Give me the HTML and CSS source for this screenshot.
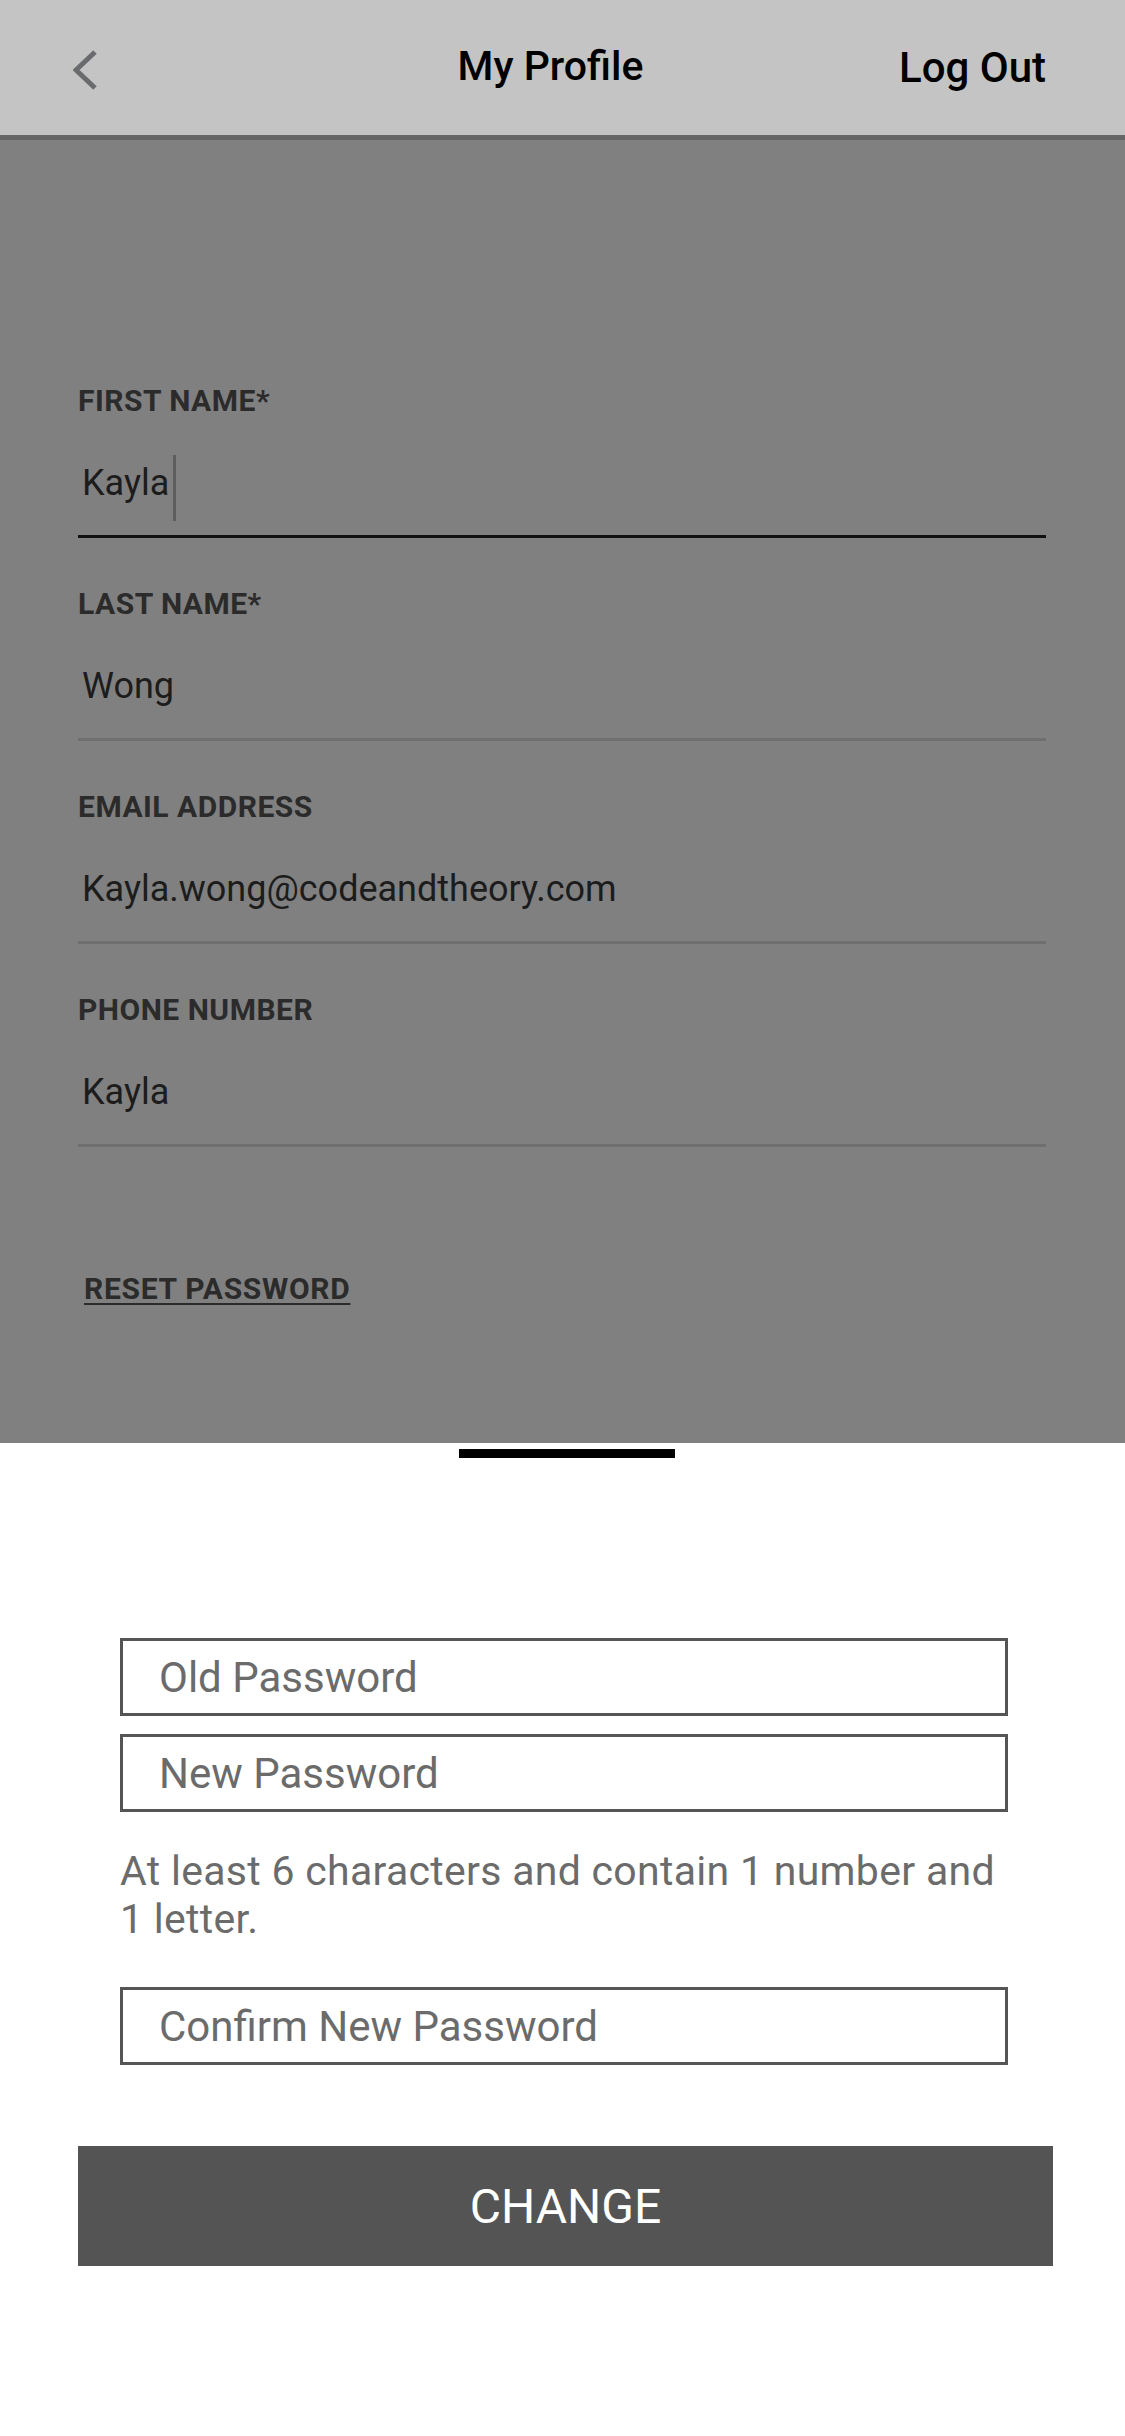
FILE: index.html
```html
<!DOCTYPE html>
<html lang="en">
<head>
  <meta charset="UTF-8" />
  <meta name="viewport" content="width=device-width, initial-scale=1.0"/>
  <title>My Profile</title>
  <link rel="stylesheet" href="styles.css">
</head>
<body>
  <header class="topbar">
    <button class="back" aria-label="Back">
      <svg width="30" height="44" viewBox="0 0 30 44">
        <polyline points="22,4 3,22 22,40" fill="none" stroke="#6a6b6e" stroke-width="5" stroke-linejoin="miter" />
      </svg>
    </button>
    <div class="title">My Profile</div>
    <a class="logout" href="#">Log Out</a>
  </header>

  <section class="profile">
    <div class="field">
      <label>FIRST NAME*</label>
      <div class="field-value focused">Kayla<span class="cursor"></span></div>
    </div>
    <div class="field">
      <label>LAST NAME*</label>
      <div class="field-value">Wong</div>
    </div>
    <div class="field">
      <label>EMAIL ADDRESS</label>
      <div class="field-value">Kayla.wong@codeandtheory.com</div>
    </div>
    <div class="field">
      <label>PHONE NUMBER</label>
      <div class="field-value">Kayla</div>
    </div>

    <a class="reset" href="#">RESET PASSWORD</a>
  </section>

  <section class="sheet">
    <div class="handle"></div>

    <form class="password-form">
      <input type="password" placeholder="Old Password">
      <input type="password" placeholder="New Password">
      <p class="hint">At least 6 characters and contain 1 number and 1 letter.</p>
      <input type="password" class="confirm" placeholder="Confirm New Password">
    </form>

    <button class="change">CHANGE</button>
  </section>
</body>
</html>
```

FILE: styles.css
```css
body {
  margin: 0;
  padding: 0;
  background: #ffffff;
  font-family: Roboto, "Noto Sans", sans-serif;
  color: #000;
}

/* top bar */
.topbar {
  height: 135px;
  background: #c4c4c4;
  border-bottom: 5px solid #666666;
  display: grid;
  grid-template-columns: 1fr auto 1fr;
  align-items: center;
  padding: 0 79px 0 73px;
}

.back {
  justify-self: start;
  background: none;
  border: 0;
  padding: 0;
  margin-top: 4px;
  display: flex;
}

.title {
  font-size: 41px;
  font-weight: 500;
  margin-right: 18px;
  margin-bottom: 3px;
}

.logout {
  justify-self: end;
  font-size: 42px;
  font-weight: 500;
  color: #000;
  text-decoration: none;
}

/* dimmed profile form */
.profile {
  box-sizing: border-box;
  height: 1303px;
  background: #808080;
  padding: 244px 79px 0 78px;
}

.field {
  margin-bottom: 49px;
}

.field label {
  display: block;
  font-size: 30px;
  line-height: 34px;
  font-weight: 700;
  letter-spacing: 0.5px;
  color: #2b2b2b;
}

.field-value {
  display: flex;
  align-items: center;
  height: 44px;
  margin-top: 43px;
  padding: 0 0 30px 4px;
  font-size: 36px;
  line-height: 44px;
  color: #1c1c1c;
  border-bottom: 3px solid #6f6f6f;
}

.field-value.focused {
  border-bottom-color: #111111;
}

.cursor {
  align-self: flex-start;
  width: 3px;
  height: 66px;
  margin: -6px 0 0 4px;
  background: #5e5e5e;
}

.reset {
  display: inline-block;
  margin: 76px 0 0 6px;
  font-size: 30px;
  line-height: 34px;
  font-weight: 700;
  letter-spacing: 0.7px;
  color: #2b2b2b;
  text-decoration: underline;
  text-decoration-thickness: 2px;
  text-underline-offset: 4px;
}

/* bottom sheet */
.sheet {
  background: #ffffff;
  padding: 0 72px 0 78px;
}

.handle {
  width: 216px;
  height: 9px;
  margin: 6px 0 0 381px;
  background: #000;
}

.password-form {
  margin: 180px 45px 0 42px;
}

.password-form input {
  display: block;
  box-sizing: border-box;
  width: 100%;
  height: 78px;
  margin: 0 0 18px;
  padding: 0 0 0 36px;
  border: 3px solid #555555;
  border-radius: 0;
  font-family: Roboto, "Noto Sans", sans-serif;
  font-size: 42px;
  color: #333;
  outline: none;
}

.password-form input::placeholder {
  color: #6b6b6b;
}

.hint {
  margin: 35px 0 44px;
  font-size: 41px;
  line-height: 48px;
  letter-spacing: 0.3px;
  color: #6b6b6b;
}

.password-form input.confirm {
  margin-bottom: 0;
}

.change {
  display: block;
  width: 100%;
  height: 120px;
  margin-top: 81px;
  border: 0;
  background: #545454;
  color: #ffffff;
  font-family: Roboto, "Noto Sans", sans-serif;
  font-size: 48px;
}
```
